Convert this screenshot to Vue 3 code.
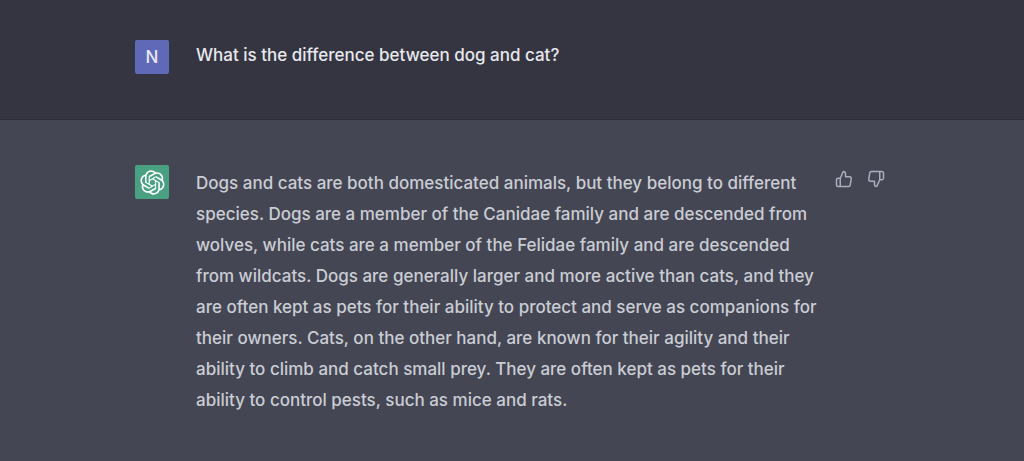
<script setup>
const question = 'What is the difference between dog and cat?'
const answer =
  'Dogs and cats are both domesticated animals, but they belong to different species. Dogs are a member of the Canidae family and are descended from wolves, while cats are a member of the Felidae family and are descended from wildcats. Dogs are generally larger and more active than cats, and they are often kept as pets for their ability to protect and serve as companions for their owners. Cats, on the other hand, are known for their agility and their ability to climb and catch small prey. They are often kept as pets for their ability to control pests, such as mice and rats.'
</script>

<template>
  <main class="chat">
    <section class="turn user">
      <div class="row">
        <div class="avatar initial">N</div>
        <p class="text">{{ question }}</p>
      </div>
    </section>
    <section class="turn assistant">
      <div class="row">
        <div class="avatar bot">
          <svg class="logo" viewBox="0 0 41 41" fill="currentColor" aria-hidden="true">
            <path d="M37.5324 16.8707C37.9808 15.5241 38.1363 14.0974 37.9886 12.6859C37.8409 11.2744 37.3934 9.91076 36.676 8.68622C35.6126 6.83404 33.9882 5.3676 32.0373 4.4985C30.0864 3.62941 27.9098 3.40259 25.8215 3.85078C24.8796 2.7893 23.7219 1.94125 22.4257 1.36341C21.1295 0.785575 19.7249 0.491269 18.3058 0.500197C16.1708 0.495044 14.0893 1.16803 12.3614 2.42214C10.6335 3.67624 9.34853 5.44666 8.6917 7.47815C7.30085 7.76286 5.98686 8.3414 4.8377 9.17505C3.68854 10.0087 2.73073 11.0782 2.02839 12.312C0.956464 14.1591 0.498905 16.2988 0.721698 18.4228C0.944492 20.5467 1.83612 22.5449 3.268 24.1293C2.81966 25.4759 2.66413 26.9026 2.81182 28.3141C2.95951 29.7256 3.40701 31.0892 4.12437 32.3138C5.18791 34.1659 6.8123 35.6322 8.76321 36.5013C10.7141 37.3704 12.8907 37.5973 14.9789 37.1492C15.9208 38.2107 17.0786 39.0587 18.3747 39.6366C19.6709 40.2144 21.0755 40.5087 22.4946 40.4998C24.6307 40.5054 26.7133 39.8321 28.4418 38.5772C30.1704 37.3223 31.4556 35.5506 32.1119 33.5179C33.5027 33.2332 34.8167 32.6547 35.9659 31.821C37.115 30.9874 38.0728 29.9178 38.7752 28.684C39.8458 26.8371 40.3023 24.6979 40.0789 22.5748C39.8556 20.4517 38.9639 18.4544 37.5324 16.8707ZM22.4978 37.8849C20.7443 37.8874 19.0459 37.2733 17.6994 36.1501C17.7601 36.117 17.8666 36.0586 17.936 36.0161L25.9004 31.4156C26.1003 31.3019 26.2663 31.137 26.3813 30.9378C26.4964 30.7386 26.5563 30.5124 26.5549 30.2825V19.0542L29.9213 20.998C29.9389 21.0068 29.9541 21.0198 29.9656 21.0359C29.977 21.052 29.9842 21.0707 29.9867 21.0902V30.3889C29.9842 32.375 29.1946 34.2791 27.7909 35.6841C26.3872 37.0892 24.4838 37.8806 22.4978 37.8849ZM6.39227 31.0064C5.51397 29.4888 5.19742 27.7107 5.49804 25.9832C5.55718 26.0187 5.66048 26.0818 5.73461 26.1244L13.699 30.7248C13.8975 30.8408 14.1233 30.902 14.3532 30.902C14.583 30.902 14.8088 30.8408 15.0073 30.7248L24.731 25.1103V28.9979C24.7321 29.0177 24.7283 29.0376 24.7199 29.0556C24.7115 29.0736 24.6988 29.0893 24.6829 29.1012L16.6317 33.7497C14.9096 34.7416 12.8643 35.0097 10.9447 34.4954C9.02506 33.9811 7.38785 32.7263 6.39227 31.0064ZM4.29707 13.6194C5.17156 12.0998 6.55279 10.9364 8.19885 10.3327C8.19885 10.4013 8.19491 10.5228 8.19491 10.6071V19.808C8.19351 20.0378 8.25334 20.2638 8.36823 20.4629C8.48312 20.6619 8.64893 20.8267 8.84863 20.9404L18.5723 26.5542L15.206 28.4979C15.1894 28.5089 15.1703 28.5155 15.1505 28.5173C15.1307 28.5191 15.1107 28.516 15.0924 28.5082L7.04046 23.8557C5.32135 22.8601 4.06716 21.2235 3.55289 19.3046C3.03862 17.3858 3.30624 15.3413 4.29707 13.6194ZM31.955 20.0556L22.2312 14.4411L25.5976 12.4981C25.6142 12.4872 25.6333 12.4805 25.6531 12.4787C25.6729 12.4769 25.6928 12.4801 25.7111 12.4879L33.7631 17.1364C34.9967 17.849 36.0017 18.8982 36.6606 20.1613C37.3194 21.4244 37.6047 22.849 37.4832 24.2684C37.3617 25.6878 36.8382 27.0432 35.9743 28.1759C35.1103 29.3086 33.9415 30.1717 32.6047 30.6641C32.6047 30.5947 32.6047 30.4733 32.6047 30.3889V21.188C32.6066 20.9586 32.5474 20.7328 32.4332 20.5338C32.319 20.3348 32.154 20.1698 31.955 20.0556ZM35.3055 15.0128C35.2464 14.9765 35.1431 14.9142 35.069 14.8717L27.1045 10.2712C26.906 10.1554 26.6803 10.0943 26.4504 10.0943C26.2206 10.0943 25.9948 10.1554 25.7963 10.2712L16.0726 15.8858V11.9982C16.0715 11.9783 16.0753 11.9585 16.0837 11.9405C16.0921 11.9225 16.1048 11.9068 16.1207 11.8949L24.1719 7.25025C25.4053 6.53903 26.8158 6.19376 28.2383 6.25482C29.6608 6.31589 31.0364 6.78077 32.2044 7.59508C33.3723 8.40939 34.2842 9.53945 34.8334 10.8531C35.3826 12.1667 35.5464 13.6095 35.3055 15.0128ZM14.2424 21.9419L10.8752 19.9981C10.8576 19.9893 10.8423 19.9763 10.8309 19.9602C10.8195 19.9441 10.8122 19.9254 10.8098 19.9058V10.6071C10.8107 9.18295 11.2173 7.78848 11.9819 6.58696C12.7466 5.38544 13.8377 4.42659 15.1275 3.82264C16.4173 3.21869 17.8524 2.99464 19.2649 3.1767C20.6775 3.35876 22.0089 3.93941 23.1034 4.85067C23.0427 4.88379 22.937 4.94215 22.8668 4.98473L14.9024 9.58517C14.7025 9.69878 14.5366 9.86356 14.4215 10.0626C14.3065 10.2616 14.2466 10.4877 14.2479 10.7175L14.2424 21.9419ZM16.071 17.9991L20.4018 15.4978L24.7325 17.9975V22.9985L20.4018 25.4983L16.071 22.9985V17.9991Z" />
          </svg>
        </div>
        <p class="text">{{ answer }}</p>
        <div class="actions">
          <button type="button" class="rate" aria-label="Good answer">
            <svg class="thumb" viewBox="0 0 24 24" aria-hidden="true">
              <path d="M14 9V5a3 3 0 0 0-3-3l-4 9v11h11.28a2 2 0 0 0 2-1.7l1.38-9a2 2 0 0 0-2-2.3zM7 22H4a2 2 0 0 1-2-2v-7a2 2 0 0 1 2-2h3" />
            </svg>
          </button>
          <button type="button" class="rate" aria-label="Bad answer">
            <svg class="thumb" viewBox="0 0 24 24" aria-hidden="true">
              <path d="M10 15v4a3 3 0 0 0 3 3l4-9V2H5.72a2 2 0 0 0-2 1.7l-1.38 9a2 2 0 0 0 2 2.3zm7-13h2.67A2.31 2.31 0 0 1 22 4v7a2.31 2.31 0 0 1-2.33 2H17" />
            </svg>
          </button>
        </div>
      </div>
    </section>
  </main>
</template>

<style>
body {
  margin: 0;
  background: #444654;
}
</style>

<style scoped>
.chat {
  display: flex;
  flex-direction: column;
  min-height: 100vh;
  font-family: Inter, "Liberation Sans", sans-serif;
  font-size: 17px;
  font-weight: 500;
}

.turn {
  padding: 40px 24px 45px;
}

.user {
  background: #343541;
  color: #e8e8ed;
  border-bottom: 1px solid #2b2c37;
}

.assistant {
  flex: 1;
  background: #444654;
  color: #cacdd3;
}

.assistant .text {
  padding-top: 3px;
}

.row {
  display: flex;
  align-items: flex-start;
  max-width: 754px;
  margin: 0 auto;
}

.turn.assistant {
  padding-top: 45px;
  padding-bottom: 40px;
}

.avatar {
  display: flex;
  flex: none;
  align-items: center;
  justify-content: center;
  width: 34px;
  height: 34px;
  margin-right: 27px;
  border-radius: 2px;
  color: #fff;
}

.initial {
  background: #5f69b8;
  color: #e6e7f5;
}

.bot {
  background: #49a182;
}

.logo {
  width: 25px;
  height: 25px;
}

.text {
  flex: 1;
  margin: 0;
  line-height: 31px;
}

.actions {
  display: flex;
  flex: none;
  gap: 10px;
  margin-left: 10px;
  padding: 3px 2px 0 0;
}

.rate {
  display: flex;
  padding: 2px;
  border: 0;
  background: none;
  color: #acacbe;
  cursor: pointer;
}

.thumb {
  width: 18px;
  height: 18px;
  fill: none;
  stroke: currentColor;
  stroke-width: 2;
  stroke-linecap: round;
  stroke-linejoin: round;
}
</style>
